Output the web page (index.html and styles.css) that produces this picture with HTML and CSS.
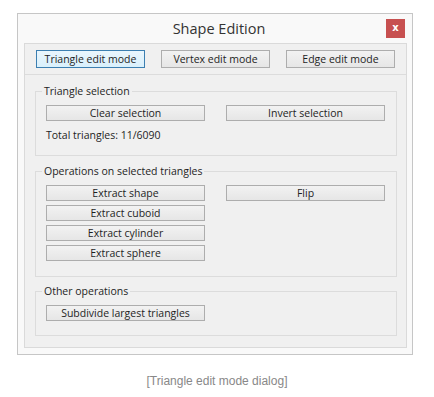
FILE: index.html
```html
<!DOCTYPE html>
<html lang="en">
<head>
	<meta charset="UTF-8">
	<title>Shape Edition</title>
	<link rel="stylesheet" href="styles.css">
</head>
<body>
	<div id="dialog">
		<div class="titlebar">
			<span class="title">Shape Edition</span>
			<a href="javascript:;" class="close">x</a>
		</div>

		<div class="panel">
			<div class="modes">
				<button class="btn mode on">Triangle edit mode</button>
				<button class="btn mode">Vertex edit mode</button>
				<button class="btn mode">Edge edit mode</button>
			</div>

			<fieldset class="group sel">
				<legend>Triangle selection</legend>
				<div class="row">
					<button class="btn">Clear selection</button>
					<button class="btn">Invert selection</button>
				</div>
				<p class="info">Total triangles: 11/6090</p>
			</fieldset>

			<fieldset class="group ops">
				<legend>Operations on selected triangles</legend>
				<div class="row">
					<div class="col">
						<button class="btn">Extract shape</button>
						<button class="btn">Extract cuboid</button>
						<button class="btn">Extract cylinder</button>
						<button class="btn">Extract sphere</button>
					</div>
					<div class="col">
						<button class="btn">Flip</button>
					</div>
				</div>
			</fieldset>

			<fieldset class="group other">
				<legend>Other operations</legend>
				<div class="row">
					<button class="btn">Subdivide largest triangles</button>
				</div>
			</fieldset>
		</div>
	</div>

	<p class="caption">[Triangle edit mode dialog]</p>
</body>
</html>
```

FILE: styles.css
```css
*{
	padding: 0;
	margin: 0;
	box-sizing: border-box;
}

body{
	background: #fff;
	font-family: "Open Sans", "Noto Sans", sans-serif;
	font-size: 10.5px;
	color: #1e1e1e;
}

#dialog{
	width: 396px;
	height: 342px;
	margin: 13px 0 0 17px;
	border: 1px solid #c6c6c6;
	background: #f9f9f9;
	padding: 0 6px;
}

.titlebar{
	height: 29px;
	display: flex;
	align-items: center;
	justify-content: center;
	position: relative;
}

.title{
	font-size: 14.5px;
	color: #333;
	margin-left: 8px;
}

.close{
	position: absolute;
	right: 1px;
	top: 5px;
	width: 19px;
	height: 19px;
	background: #c75050;
	color: #fff;
	font-family: "DejaVu Sans", sans-serif;
	font-size: 10px;
	font-weight: bold;
	line-height: 17px;
	text-align: center;
	text-decoration: none;
}

.panel{
	width: 383px;
	height: 305px;
	border: 1px solid #dadada;
	background: #f0f0f0;
}

.modes{
	display: flex;
	gap: 16px;
	padding: 6px 0 0 11px;
	height: 31px;
	border-bottom: 1px solid #dcdcdc;
	margin-bottom: 8px;
}

.btn{
	display: block;
	width: 159px;
	height: 16px;
	border: 1px solid #adadad;
	background: linear-gradient(#f2f2f2, #e6e6e6);
	font-family: inherit;
	font-size: 10.5px;
	line-height: 13px;
	color: #1e1e1e;
}

.btn.mode{
	width: 109px;
	height: 18px;
	line-height: 15px;
}

.btn.on{
	border-color: #3c7fb1;
	background: linear-gradient(#eaf6fd, #d9f0fc);
}

.group{
	margin: 0 9px 7px 10px;
	border: 1px solid #dcdcdc;
	padding: 6px 10px 9px;
}

.group legend{
	margin-left: -4px;
	padding: 0 2px;
	font-size: 10.5px;
	line-height: 16px;
}

.group.sel{
	height: 73px;
}

.group.ops{
	height: 114px;
	margin-bottom: 6px;
}

.group.other{
	height: 53px;
}

.row{
	display: flex;
	gap: 21px;
}

.col{
	display: flex;
	flex-direction: column;
	gap: 4px;
}

.info{
	margin-top: 7px;
}

.caption{
	margin-top: 19px;
	text-align: center;
	font-family: "Liberation Sans", Arial, sans-serif;
	font-size: 12px;
	color: #888;
}
```
